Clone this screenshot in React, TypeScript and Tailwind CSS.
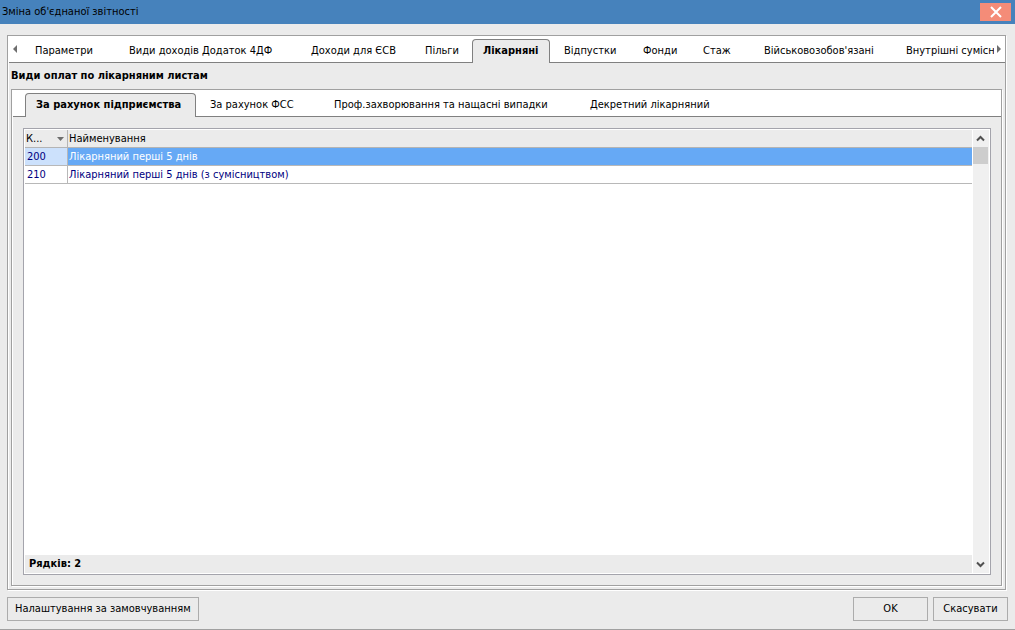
import React from 'react';
import clsx from 'clsx';

type TabItem = {
  label: string;
  width: string;
  active?: boolean;
};

const mainTabs: TabItem[] = [
  { label: 'Параметри', width: 'w-[94px]' },
  { label: 'Види доходів Додаток 4ДФ', width: 'w-[182px]' },
  { label: 'Доходи для ЄСВ', width: 'w-[114px]' },
  { label: 'Пільги', width: 'w-[57px]' },
  { label: 'Лікарняні', width: 'w-[78px]', active: true },
  { label: 'Відпустки', width: 'w-[79px]' },
  { label: 'Фонди', width: 'w-[60px]' },
  { label: 'Стаж', width: 'w-[61px]' },
  { label: "Військовозобов'язані", width: 'w-[142px]' },
  { label: 'Внутрішні сумісни', width: 'w-[110px]' },
];

const sickTabs: TabItem[] = [
  { label: 'За рахунок підприємства', width: 'w-[171px]', active: true },
  { label: 'За рахунок ФСС', width: 'w-[124px]' },
  { label: 'Проф.захворювання та нащасні випадки', width: 'w-[256px]' },
  { label: 'Декретний лікарняний', width: 'w-[140px]' },
];

const rows = [
  { code: '200', name: 'Лікарняний перші 5 днів' },
  { code: '210', name: 'Лікарняний перші 5 днів (з сумісництвом)' },
];

// Tab Component
const Tab: React.FC<{ tab: TabItem }> = ({ tab }) => (
  <button
    role="tab"
    aria-selected={!!tab.active}
    className={clsx(
      'h-6 shrink-0 pl-[10px] text-left whitespace-nowrap',
      tab.width,
      tab.active && 'mr-1 rounded-t border border-b-0 border-[#808080] bg-[#ebebeb] pb-[2px] font-bold'
    )}
  >
    {tab.label}
  </button>
);

// Payments Table
const PaymentsTable: React.FC = () => (
  <table className="w-full table-fixed border-separate border-spacing-0 text-left leading-[17px]">
    <colgroup>
      <col className="w-[43px]" />
      <col />
    </colgroup>
    <thead>
      <tr className="h-[18px] bg-[#ebebeb]">
        <th className="border-r border-b border-[#b4b4b4] p-0 pl-px font-normal">
          <button className="flex w-full items-center justify-between pr-[3px]">
            К...
            <svg className="h-1 w-[7px]" viewBox="0 0 7 4">
              <path d="M0 0h7L3.5 4z" fill="#6e6e6e" />
            </svg>
          </button>
        </th>
        <th className="border-b border-[#b4b4b4] p-0 pl-px font-normal">Найменування</th>
      </tr>
    </thead>
    <tbody className="text-[#000080]">
      {rows.map((row, i) => (
        <tr key={row.code} className="h-[18px]">
          <td className={clsx('border-r border-b border-[#b8b8b8] p-0 pl-[2px]', i === 0 && 'bg-[#cce1fc]')}>
            {row.code}
          </td>
          <td className={clsx('border-b border-[#b8b8b8] p-0 pl-px', i === 0 && 'bg-[#66a9f5] text-white')}>
            {row.name}
          </td>
        </tr>
      ))}
    </tbody>
  </table>
);

// Scroll Bar
const ScrollBar: React.FC = () => (
  <div className="ml-px mr-px flex w-4 shrink-0 flex-col bg-[#f0f0f0] pr-px">
    <button aria-label="Вгору" className="flex h-[17px] items-center justify-center">
      <svg className="h-[7px] w-[9px]" viewBox="0 0 9 7">
        <path d="M1 5.5l3.5-3.5L8 5.5" fill="none" stroke="#505050" strokeWidth="2" />
      </svg>
    </button>
    <div className="h-[17px] bg-[#cdcdcd]" />
    <button aria-label="Вниз" className="mt-auto flex h-[17px] items-center justify-center">
      <svg className="h-[7px] w-[9px]" viewBox="0 0 9 7">
        <path d="M1 1.5L4.5 5 8 1.5" fill="none" stroke="#505050" strokeWidth="2" />
      </svg>
    </button>
  </div>
);

const App: React.FC = () => {
  return (
    <div className="flex min-h-screen flex-col border-b border-[#a0a0a0] bg-[#ebebeb] font-['DejaVu_Sans_Condensed','DejaVu_Sans',sans-serif] text-[11px] leading-4 text-black">
      {/* Title Bar */}
      <header className="flex h-6 items-center justify-between bg-[#4682bc] pl-[2px] pr-1">
        <h1>Зміна об'єднаної звітності</h1>
        <button aria-label="Закрити" className="flex h-[18px] w-[31px] items-center justify-center bg-[#f48c78]">
          <svg className="h-3 w-3" viewBox="0 0 12 12">
            <path d="M1 1l10 10M11 1L1 11" stroke="#fff" strokeWidth="2" />
          </svg>
        </button>
      </header>

      {/* Main Panel */}
      <main className="ml-[7px] mr-[9px] mt-[11px] flex grow flex-col border border-[#a0a0a0] shadow-[inset_1px_1px_0_#fff,1px_1px_0_#fff]">
        <div className="ml-px flex h-[27px] items-end border-b border-[#808080] bg-white">
          <button aria-label="Попередні вкладки" className="flex h-full w-4 shrink-0 items-center pl-1">
            <svg className="h-2 w-1" viewBox="0 0 4 8">
              <path d="M4 0v8L0 4z" fill="#6e6e6e" />
            </svg>
          </button>
          <div role="tablist" className="-mb-px flex min-w-0 grow overflow-hidden">
            {mainTabs.map((tab) => (
              <Tab key={tab.label} tab={tab} />
            ))}
          </div>
          <button aria-label="Наступні вкладки" className="flex h-full w-[11px] shrink-0 items-center pl-[3px]">
            <svg className="h-2 w-1" viewBox="0 0 4 8">
              <path d="M0 0v8l4-4z" fill="#6e6e6e" />
            </svg>
          </button>
        </div>

        <h2 className="px-[3px] py-[5px] font-bold">Види оплат по лікарняним листам</h2>

        {/* Sick Leave Panel */}
        <section className="mx-[3px] mb-[3px] flex grow flex-col border border-[#a0a0a0] shadow-[inset_1px_1px_0_#fff,1px_1px_0_#fff]">
          <div className="ml-px flex h-[27px] items-end border-b border-[#808080] bg-white pl-3">
            <div role="tablist" className="-mb-px flex min-w-0 grow overflow-hidden">
              {sickTabs.map((tab) => (
                <Tab key={tab.label} tab={tab} />
              ))}
            </div>
          </div>

          <div className="mt-[11px] mr-[10px] mb-[10px] ml-[11px] flex grow border border-[#a4a4ac] bg-white py-px pl-px">
            <div className="flex min-w-0 grow flex-col">
              <PaymentsTable />
              <div className="mt-auto bg-[#ebebeb] px-1 leading-[18px] font-bold">Рядків: 2</div>
            </div>
            <ScrollBar />
          </div>
        </section>
      </main>

      {/* Footer Buttons */}
      <footer className="flex gap-[5px] px-[7px] pt-[7px] pb-2">
        <button className="mr-auto h-6 border border-[#acacac] px-[7px]">Налаштування за замовчуванням</button>
        <button className="h-6 w-[75px] border border-[#acacac]">OK</button>
        <button className="h-6 w-[75px] border border-[#acacac]">Скасувати</button>
      </footer>
    </div>
  );
};

export default App;
